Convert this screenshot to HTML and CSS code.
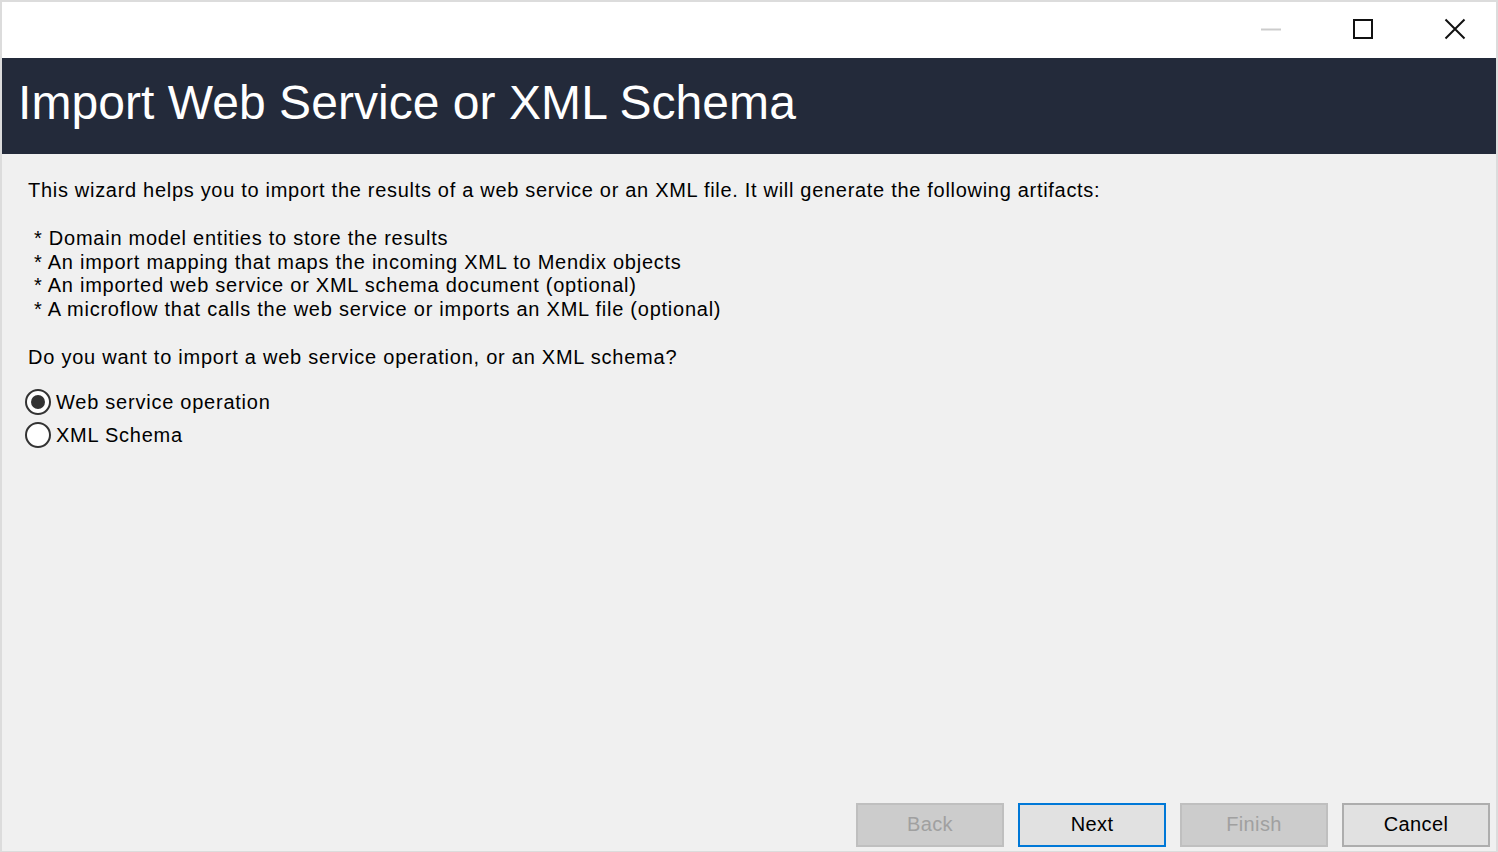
FILE: index.html
```html
<!DOCTYPE html>
<html>
<head>
<meta charset="utf-8">
<link rel="stylesheet" href="styles.css">
</head>
<body>
<div class="window">
  <div class="titlebar">
    <div class="winbtn"><svg width="22" height="22" viewBox="0 0 22 22"><line x1="1" y1="11.5" x2="21" y2="11.5" stroke="#cccccc" stroke-width="2"/></svg></div>
    <div class="winbtn"><svg width="22" height="22" viewBox="0 0 22 22"><rect x="2" y="2" width="18" height="18" fill="none" stroke="#111" stroke-width="2"/></svg></div>
    <div class="winbtn"><svg width="22" height="22" viewBox="0 0 22 22"><path d="M1.5 1.5 L20.5 20.5 M20.5 1.5 L1.5 20.5" stroke="#111" stroke-width="2"/></svg></div>
  </div>
  <div class="header"><h1 class="title">Import Web Service or XML Schema</h1></div>
  <div class="content">
    <p class="intro">This wizard helps you to import the results of a web service or an XML file. It will generate the following artifacts:</p>
    <ul class="artifacts">
      <li>* Domain model entities to store the results</li>
      <li>* An import mapping that maps the incoming XML to Mendix objects</li>
      <li>* An imported web service or XML schema document (optional)</li>
      <li>* A microflow that calls the web service or imports an XML file (optional)</li>
    </ul>
    <p class="question">Do you want to import a web service operation, or an XML schema?</p>
    <div class="options">
      <label class="option"><span class="radio checked"></span><span>Web service operation</span></label>
      <label class="option"><span class="radio"></span><span>XML Schema</span></label>
    </div>
    <div class="spacer"></div>
    <div class="buttons">
      <button class="btn disabled">Back</button>
      <button class="btn primary">Next</button>
      <button class="btn disabled">Finish</button>
      <button class="btn">Cancel</button>
    </div>
  </div>
</div>
</body>
</html>
```
FILE: styles.css
```css
* { box-sizing: border-box; }
html, body { margin: 0; padding: 0; }
body {
  width: 1498px;
  height: 852px;
  background: #dcdcdc;
  font-family: "Liberation Sans", Arial, sans-serif;
  color: #000;
}
.window {
  margin: 2px 2px 0 2px;
  height: 849px;
  display: flex;
  flex-direction: column;
  background: #f0f0f0;
}
.titlebar {
  height: 56px;
  background: #fff;
  display: flex;
  justify-content: flex-end;
  align-items: flex-start;
  padding-top: 16px;
  padding-right: 30px;
  gap: 70px;
}
.winbtn { width: 22px; height: 22px; }
.winbtn svg { display: block; }
.header {
  height: 96px;
  background: #232a3a;
  display: flex;
  align-items: center;
  padding-left: 16px;
}
.title {
  margin: 0;
  font-weight: normal;
  font-size: 48px;
  color: #fff;
  letter-spacing: 0.05px;
  line-height: 1;
  margin-top: -6px;
}
.content {
  flex: 1;
  display: flex;
  flex-direction: column;
  padding: 24px 0 4px 26px;
  font-size: 20px;
  letter-spacing: 0.7px;
}
.intro { margin: 0; line-height: 24px; }
.artifacts {
  list-style: none;
  margin: 25px 0 0 6px;
  padding: 0;
  line-height: 23.7px;
}
.artifacts li { letter-spacing: 0.75px; }
.question { margin: 23px 0 0 0; line-height: 24px; letter-spacing: 0.76px; }
.options {
  margin-top: 20px;
  margin-left: -3px;
  display: flex;
  flex-direction: column;
  gap: 7px;
}
.option {
  display: flex;
  align-items: center;
  gap: 5px;
  line-height: 26px;
  letter-spacing: 0.76px;
}
.radio {
  width: 26px;
  height: 26px;
  border: 2px solid #333;
  border-radius: 50%;
  background: #fff;
  display: flex;
  align-items: center;
  justify-content: center;
}
.radio.checked::after {
  content: "";
  width: 14px;
  height: 14px;
  border-radius: 50%;
  background: #333;
}
.spacer { flex: 1; }
.buttons {
  display: flex;
  justify-content: flex-end;
  gap: 14px;
  padding-right: 6px;
}
.btn {
  width: 148px;
  height: 44px;
  font-family: inherit;
  font-size: 20px;
  letter-spacing: 0.4px;
  background: #e1e1e1;
  border: 2px solid #adadad;
  color: #000;
  padding: 0 0 2px 0;
}
.btn.primary { border-color: #0078d7; }
.btn.disabled {
  background: #cccccc;
  border-color: #bfbfbf;
  color: #a0a0a0;
}
```
